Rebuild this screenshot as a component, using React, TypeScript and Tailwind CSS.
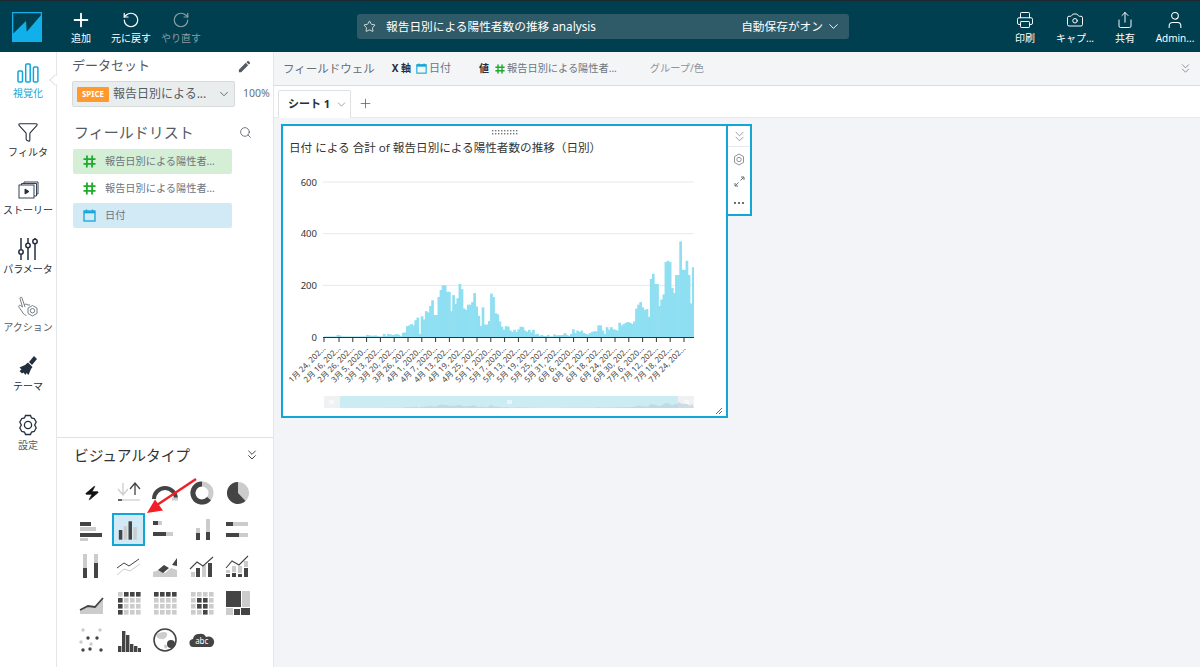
import {
  Camera,
  ChevronDown,
  ChevronsDown,
  Funnel,
  Plus,
  Printer,
  RotateCcw,
  RotateCw,
  Search,
  Share,
  Star,
  User,
  Zap,
} from 'lucide-react';
import { MdEdit } from 'react-icons/md';
import type { ReactNode } from 'react';

const FONT = "font-['Noto_Sans','Noto_Sans_CJK_JP',sans-serif]";

// daily counts read off the chart
const counts = [
  2, 2, 2, 2, 2, 2, 8, 6, 2, 2, 2, 2, 2, 2, 2, 2, 2, 2, 2, 2, 8, 6, 5, 5, 6, 3, 2, 2, 12, 3, 12, 10, 8, 9, 12, 9, 3, 16,
  18, 42, 45, 50, 45, 65, 75, 12, 80, 68, 100, 95, 120, 142, 85, 85, 155, 182, 200, 200, 175, 175, 100, 162, 128, 150,
  205, 185, 110, 105, 125, 125, 135, 170, 118, 82, 43, 115, 48, 48, 62, 168, 155, 92, 88, 60, 40, 28, 42, 40, 25, 20,
  28, 20, 30, 40, 38, 25, 20, 28, 18, 28, 10, 12, 5, 8, 4, 3, 8, 2, 2, 10, 6, 7, 7, 8, 15, 8, 4, 12, 30, 15, 25, 20, 25,
  15, 12, 10, 15, 20, 22, 22, 45, 45, 25, 12, 38, 28, 38, 30, 28, 25, 55, 45, 50, 55, 58, 55, 50, 60, 110, 125, 135,
  115, 105, 108, 78, 225, 245, 205, 205, 120, 145, 165, 290, 295, 290, 190, 170, 240, 240, 370, 260, 260, 295, 240, 130,
  270,
];

const dates = [
  '1月 24, 202...', '2月 16, 202...', '2月 26, 202...', '3月 5, 2020...', '3月 13, 202...', '3月 20, 202...',
  '3月 26, 202...', '4月 1, 2020...', '4月 7, 2020...', '4月 13, 202...', '4月 19, 202...', '4月 25, 202...',
  '5月 1, 2020...', '5月 7, 2020...', '5月 13, 202...', '5月 19, 202...', '5月 25, 202...', '5月 31, 202...',
  '6月 6, 2020...', '6月 12, 202...', '6月 18, 202...', '6月 24, 202...', '6月 30, 202...', '7月 6, 2020...',
  '7月 12, 202...', '7月 18, 202...', '7月 24, 202...',
];

function HashIcon({ size = 13, className = '' }: { size?: number; className?: string }) {
  return (
    <svg width={size} height={size} viewBox="0 0 13 13" fill="none" stroke="#1dab2c" strokeWidth="1.8" className={className}>
      <path d="M4 .5l-.2 12M9.200 .5L9 12.500M.5 4.200h12M.5 8.800h12" />
    </svg>
  );
}

function CalendarIcon({ size = 13, className = '' }: { size?: number; className?: string }) {
  return (
    <svg width={size} height={size} viewBox="0 0 13 13" fill="none" stroke="#12a5d6" strokeWidth="1.3" className={className}>
      <rect x="1" y="2" width="11" height="10" />
      <path d="M1 3.300h11" strokeWidth="2" />
      <path d="M3.500 .5v2M9.500 .5v2" />
    </svg>
  );
}

function TopButton({ icon, label, dim }: { icon: ReactNode; label: string; dim?: boolean }) {
  return (
    <div className={`flex w-[50px] flex-col items-center ${dim ? 'text-[#8a9da3]' : 'text-white'}`}>
      <div className="flex h-[22px] items-center">{icon}</div>
      <span className="text-[10px] leading-[14px] whitespace-nowrap">{label}</span>
    </div>
  );
}

function RailItem({ icon, label, active, muted }: { icon: ReactNode; label: string; active?: boolean; muted?: boolean }) {
  return (
    <div className={`flex h-[58.6px] flex-col items-center ${active ? 'text-[#12a5d6]' : muted ? 'text-[#545b64]' : 'text-[#232f3e]'}`}>
      <div className="flex h-[26px] items-center justify-center">{icon}</div>
      <span className="text-[10px] leading-[14px] whitespace-nowrap">{label}</span>
    </div>
  );
}

function FieldRow({ kind, label, bg }: { kind: 'hash' | 'date'; label: string; bg: string }) {
  return (
    <div className={`flex h-[25px] items-center rounded-[2px] pl-[10px] ${bg}`}>
      {kind === 'hash' ? <HashIcon /> : <CalendarIcon />}
      <span className="ml-[9px] text-[10.2px] text-[#6b7580]">{label}</span>
    </div>
  );
}

const D = '#444';
const L = '#ccc';

// rects drawn on a 30x30 box, [x, y, w, h, fill]
function Bars({ items }: { items: number[][] }) {
  return (
    <svg width="30" height="30" viewBox="0 0 30 30">
      {items.map(([x, y, w, h, c], i) => (
        <rect key={i} x={x} y={y} width={w} height={h} fill={c ? D : L} />
      ))}
    </svg>
  );
}

function Cells({ dark }: { dark: number[] }) {
  const cells = [];
  for (let r = 0; r < 4; r++) {
    for (let c = 0; c < 4; c++) {
      cells.push(
        <rect key={`${r}${c}`} x={4 + c * 6} y={4 + r * 6} width="4.6" height="4.6" fill={dark.includes(r * 4 + c) ? D : L} />,
      );
    }
  }
  return (
    <svg width="30" height="30" viewBox="0 0 30 30">
      {cells}
    </svg>
  );
}

function VisualTypes() {
  const icons: ReactNode[] = [
    <Zap key="a" size={16} fill="#111" strokeWidth={1} className="-skew-x-12 text-[#111]" />,
    <svg key="b" width="30" height="30" viewBox="0 0 30 30" fill="none">
      <path d="M9 5v12M4 11l5 6 5-6" stroke={L} strokeWidth="1.3" />
      <path d="M21 17V5M16 11l5-6 5 6" stroke={D} strokeWidth="1.3" />
      <path d="M4 22h22" stroke={L} strokeWidth="1.2" />
      <path d="M4 22h4" stroke={D} strokeWidth="1.6" />
    </svg>,
    <svg key="c" width="30" height="30" viewBox="0 0 30 30" fill="none">
      <path d="M4 21a11 11 0 0 1 22 0" stroke={D} strokeWidth="4" />
      <path d="M22 21h6" stroke={L} strokeWidth="3" />
    </svg>,
    <svg key="d" width="30" height="30" viewBox="0 0 30 30" fill="none">
      <circle cx="15" cy="15" r="9" stroke={L} strokeWidth="5" />
      <path d="M15 6a9 9 0 1 0 7 14.6" stroke={D} strokeWidth="5" />
    </svg>,
    <svg key="e" width="30" height="30" viewBox="0 0 30 30">
      <circle cx="15" cy="15" r="11" fill={L} />
      <path d="M15 15V4A11 11 0 1 0 22.500 23Z" fill={D} />
    </svg>,
    <Bars key="f" items={[[3, 7, 11, 4, 1], [3, 12, 16, 4, 0], [3, 18, 22, 4, 1], [3, 23, 8, 3, 0]]} />,
    <Bars key="g" items={[[5, 15, 3.6, 10, 1], [10, 11, 3.6, 14, 0], [15, 6, 3.6, 19, 1], [20, 12, 3.6, 13, 0]]} />,
    <Bars key="h" items={[[3, 6, 5, 4, 1], [8, 6, 4, 4, 0], [3, 17, 13, 4, 1], [16, 17, 7, 4, 0]]} />,
    <Bars key="i" items={[[9, 13, 4, 5, 0], [9, 18, 4, 7, 1], [19, 4, 4, 13, 0], [19, 17, 4, 8, 1]]} />,
    <Bars key="j" items={[[3, 7, 7, 4, 1], [10, 7, 15, 4, 0], [3, 18, 13, 4, 1], [16, 18, 9, 4, 0]]} />,
    <Bars key="k" items={[[6, 3, 4, 14, 0], [6, 17, 4, 10, 1], [17, 3, 4, 9, 0], [17, 12, 4, 15, 1]]} />,
    <svg key="l" width="30" height="30" viewBox="0 0 30 30" fill="none">
      <path d="M3 17l7-5 5 3 10-7" stroke={D} strokeWidth="1" />
      <path d="M3 24l7-6 6 2 10-7" stroke={L} strokeWidth="1" />
    </svg>,
    <svg key="m" width="30" height="30" viewBox="0 0 30 30">
      <path d="M3 26v-5l6-2 6 3 6-5 6 2v7Z" fill={L} />
      <path d="M8 19l6-5 5 3-6 5ZM22 14l5-7v8Z" fill={D} />
    </svg>,
    <svg key="n" width="30" height="30" viewBox="0 0 30 30" fill="none">
      <rect x="9" y="17" width="4" height="9" fill={D} />
      <rect x="4" y="21" width="4" height="5" fill={L} />
      <rect x="15" y="14" width="4" height="12" fill={L} />
      <rect x="21" y="12" width="4" height="14" fill={D} />
      <path d="M3 18l7-7 6 4 10-9" stroke={D} strokeWidth="1.1" />
    </svg>,
    <svg key="o" width="30" height="30" viewBox="0 0 30 30" fill="none">
      <rect x="3" y="23" width="4" height="3" fill={D} />
      <rect x="9" y="22" width="4" height="4" fill={D} />
      <rect x="15" y="23" width="4" height="3" fill={D} />
      <rect x="21" y="17" width="4" height="9" fill={D} />
      <rect x="3" y="19" width="4" height="3" fill={L} />
      <rect x="9" y="15" width="4" height="6" fill={L} />
      <rect x="15" y="15" width="4" height="7" fill={L} />
      <rect x="21" y="10" width="4" height="6" fill={L} />
      <path d="M3 17l6-7 7 4 9-9" stroke={D} strokeWidth="1.1" />
    </svg>,
    <svg key="p" width="30" height="30" viewBox="0 0 30 30" fill="none">
      <path d="M3 22l8-4 7 1 8-9v16H3Z" fill={L} />
      <path d="M3 22l8-4 7 1 8-9" stroke={D} strokeWidth="1.8" />
    </svg>,
    <Cells key="q" dark={[1, 2, 3, 4, 8, 12]} />,
    <Cells key="r" dark={[0, 1, 2, 3]} />,
    <Cells key="s" dark={[5, 6, 9, 10, 14]} />,
    <Bars key="t" items={[[3, 3, 15, 16, 1], [19, 3, 8, 16, 0], [3, 20, 7, 7, 0], [11, 21, 6, 6, 1], [18, 20, 9, 7, 1]]} />,
    <svg key="u" width="30" height="30" viewBox="0 0 30 30">
      {[[6, 5, 0], [23, 5, 0], [11, 13, 1], [20, 13, 1], [14, 19, 0], [6, 25, 1], [13, 24, 1], [24, 25, 1], [4, 17, 0]].map(
        ([x, y, c], i) => (
          <circle key={i} cx={x} cy={y} r="1.7" fill={c ? D : L} />
        ),
      )}
    </svg>,
    <Bars key="v" items={[[4, 21, 3.4, 6, 1], [8, 6, 3.4, 21, 1], [12, 10, 3.4, 17, 1], [16, 19, 3.4, 8, 1], [20, 21, 3.4, 6, 1], [24, 23, 3, 4, 1]]} />,
    <svg key="w" width="30" height="30" viewBox="0 0 30 30">
      <circle cx="15" cy="15" r="11" fill="#fff" stroke={D} strokeWidth="1.6" />
      <path d="M6 10c4-3 9-4 11-2 1 3-2 7-6 6-2 0-4-1-5-4ZM14 20c2-1 4 0 3 3-2 1-3 0-3-3Z" fill={L} />
      <circle cx="21" cy="19" r="4" fill={D} />
    </svg>,
    <div key="x" className="relative flex h-[30px] w-[30px] items-center justify-center">
      <svg width="26" height="18" viewBox="0 0 26 18" className="absolute">
        <path d="M5 16a4 4 0 0 1-1-8 6 6 0 0 1 6-5 6 6 0 0 1 7 3 5 5 0 0 1 5 10Z" fill={D} />
      </svg>
      <span className="relative top-[1px] text-[8px] text-white">abc</span>
    </div>,
  ];

  return (
    <div className="mt-[9px] grid grid-cols-[repeat(5,36.5px)] auto-rows-[36.6px] justify-start pl-[17px]">
      {icons.map((icon, i) => (
        <div key={i} className="flex items-center justify-center">
          {i === 6 ? (
            <div className="flex h-[33px] w-[33px] items-center justify-center border-2 border-[#12a5d6] bg-[#d2eaf6]">{icon}</div>
          ) : (
            icon
          )}
        </div>
      ))}
    </div>
  );
}

function Chart() {
  const base = 337;
  const unit = 155 / 600;
  const step = 370 / counts.length;
  const mini = counts.map((c, i) => `${324 + i * step},${408 - c * 0.016}`).join(' ');
  return (
    <svg viewBox="283 160 442 256" width="442" height="256" className="block">
      {[600, 400, 200].map((v) => (
        <line key={v} x1="323" x2="694" y1={base - v * unit} y2={base - v * unit} stroke="#e6e8eb" strokeWidth="1" />
      ))}
      {[600, 400, 200, 0].map((v) => (
        <text key={v} x="317" y={base - v * unit + 3.5} textAnchor="end" fontSize="9.5" fill="#333">
          {v}
        </text>
      ))}
      {counts.map((c, i) => (
        <rect key={i} x={324 + i * step} y={base - c * unit} width={i === counts.length - 1 ? step : step + 0.6} height={c * unit} fill="#8fdff2" />
      ))}
      <line x1="323" x2="694" y1={base + 0.5} y2={base + 0.5} stroke="#333" />
      {dates.map((d, i) => {
        const x = i === 0 ? 324 : 339 + (i - 1) * 13.8;
        return (
          <g key={d}>
            <line x1={x} x2={x} y1={base} y2={base + 5} stroke="#333" />
            <text x={x + 2} y={base + 12} transform={`rotate(-45 ${x + 2} ${base + 12})`} textAnchor="end" fontSize="8" fill="#444">
              {d}
            </text>
          </g>
        );
      })}
      <rect x="324" y="396" width="370" height="12" fill="#f0f1f3" />
      <rect x="340" y="396" width="338" height="12" fill="#ccecf4" />
      <polygon points={`324,408 ${mini} 694,408`} fill="#b4cfd6" opacity="0.6" />
      <path d="M507 401h5M507 403h5M329 401h5M329 403h5M684 401h5M684 403h5" stroke="#fff" />
      <path d="M716 414l6-6M719 414l3-3" stroke="#555" strokeWidth="0.9" />
    </svg>
  );
}

export default function App() {
  return (
    <div className={`flex h-[667px] w-[1200px] flex-col overflow-hidden bg-[#f3f4f7] ${FONT}`}>
      <header className="flex h-[52px] shrink-0 items-center border-t border-t-[#1b2a30] bg-[#003f4f] pl-[12px]">
        <svg width="30" height="30" viewBox="0 0 30 30" className="shrink-0">
          <rect width="30" height="30" fill="#12b0ea" />
          <path d="M1.300 1.300h27.400v2.200L14.700 19.700 14 9 1.300 21.500Z" fill="#003f4f" />
        </svg>
        <div className="ml-[14px] flex">
          <TopButton icon={<Plus size={22} strokeWidth={2} />} label="追加" />
          <TopButton icon={<RotateCcw size={18} strokeWidth={1.6} />} label="元に戻す" />
          <TopButton icon={<RotateCw size={18} strokeWidth={1.6} />} label="やり直す" dim />
        </div>
        <div className="ml-[151px] flex h-[25px] w-[492px] items-center rounded-[3px] bg-[#2f5b69] pl-[6px] pr-[8px] text-[11.7px] text-white">
          <Star size={13} strokeWidth={1.4} />
          <span className="ml-[10px]">報告日別による陽性者数の推移 analysis</span>
          <span className="ml-auto">自動保存がオン</span>
          <ChevronDown size={15} strokeWidth={1.5} className="ml-[3px]" />
        </div>
        <div className="ml-auto flex">
          <TopButton icon={<Printer size={18} strokeWidth={1.3} />} label="印刷" />
          <TopButton icon={<Camera size={18} strokeWidth={1.3} />} label="キャプ..." />
          <TopButton icon={<Share size={18} strokeWidth={1.3} />} label="共有" />
          <TopButton icon={<User size={20} strokeWidth={1.3} />} label="Admin..." />
        </div>
      </header>

      <div className="flex min-h-0 flex-1">
        <nav className="relative z-10 w-[57px] shrink-0 border-r border-[#e4e6e9] bg-white pt-[8px]">
          <RailItem
            active
            label="視覚化"
            icon={
              <svg width="22" height="22" viewBox="0 0 22 22" fill="none" stroke="currentColor" strokeWidth="1.5">
                <rect x="1" y="9" width="4.5" height="11" rx="1" />
                <rect x="8.700" y="2" width="4.5" height="18" rx="1" />
                <rect x="16.400" y="5" width="4.5" height="15" rx="1" />
              </svg>
            }
          />
          <RailItem label="フィルタ" icon={<Funnel size={22} strokeWidth={1.2} />} />
          <RailItem
            label="ストーリー"
            icon={
              <svg width="21" height="18" viewBox="0 0 21 18" fill="none" stroke="currentColor" strokeWidth="0.9">
                <rect x="1" y="4" width="15" height="13" />
                <path d="M3.500 4V2.500h15V15H16M6 2.500V1h14v12h-1.500" />
                <path d="M7 8l4 2.500L7 13Z" fill="currentColor" />
              </svg>
            }
          />
          <RailItem
            label="パラメータ"
            icon={
              <svg width="20" height="24" viewBox="0 0 20 24" fill="none" stroke="currentColor" strokeWidth="1.5">
                <path d="M3 1v11M3 18v5M10 1v5M10 11v12M17 1v1M17 7v16" />
                <circle cx="3" cy="15" r="2.200" />
                <circle cx="10" cy="8.500" r="2.200" />
                <circle cx="17" cy="4.500" r="2.200" />
              </svg>
            }
          />
          <RailItem
            muted
            label="アクション"
            icon={
              <svg width="22" height="24" viewBox="0 0 22 24" fill="none" stroke="#687078" strokeWidth="0.9">
                <path d="M8 12L5 3C4.600 1.600 2.800 2 3 3.600L5.500 12 3.500 10.500C2.500 9.800 1.200 11 2 12.200L6 18C7 19.500 8 20 9.500 20.500M7.500 9.500L9 9l2 1h2" />
                <path d="M15.500 10.500l4.500 2.600v5.300l-4.500 2.600-4.500-2.600v-5.300Z" />
                <circle cx="15.500" cy="15.700" r="2.200" />
              </svg>
            }
          />
          <RailItem
            label="テーマ"
            icon={
              <svg width="22" height="22" viewBox="0 0 22 22" fill="currentColor">
                <path d="M17 1l3 3-5 6-3-3Z" />
                <path d="M11 7.500l4.500 4.500-1.500 2-2.500 6-2-2-1 2-2-2.500-1.500 1-2.500-2.500 2-1.500-2-2 5.500-2.500Z" />
              </svg>
            }
          />
          <RailItem
            muted
            label="設定"
            icon={
              <svg width="20" height="22" viewBox="0 0 20 22" fill="none" stroke="#232f3e" strokeWidth="1.3">
                <path d="M7.500 1.500h5l1 2.500 2.700.5 2 3.500-1.500 3 1.500 3-2 3.500-2.700.5-1 2.500h-5l-1-2.500-2.700-.5-2-3.500 1.500-3-1.500-3 2-3.500 2.700-.5Z" />
                <circle cx="10" cy="11" r="3.600" />
              </svg>
            }
          />
          <div className="absolute top-[24px] right-[-3px] h-[8px] w-[8px] rotate-45 border-b border-l border-[#dfe2e5] bg-white" />
        </nav>

        <aside className="flex w-[217px] shrink-0 flex-col border-r border-[#e4e6e9] bg-white">
          <div className="h-[385px] shrink-0 pl-[15px] pr-[3px] pt-[4px]">
            <div className="flex h-[20px] items-center justify-between pr-[18px] text-[13px] text-[#545b64]">
              <span>データセット</span>
              <MdEdit size={15} className="text-[#545b64]" />
            </div>
            <div className="mt-[5px] flex items-center">
              <div className="flex h-[26px] w-[163px] items-center rounded-[2px] border border-[#d5dbdb] bg-[#eaeded] pl-[4px] pr-[3px]">
                <span className="flex h-[15px] w-[32px] items-center justify-center rounded-[1px] bg-[#ff9a2e] text-[8px] font-bold text-white">SPICE</span>
                <span className="ml-[4px] whitespace-nowrap text-[12px] text-[#545b64]">報告日別による...</span>
                <ChevronDown size={14} strokeWidth={1.5} className="ml-auto text-[#545b64]" />
              </div>
              <span className="ml-[8px] text-[10.5px] text-[#687078]">100%</span>
            </div>
            <div className="mt-[13px] flex h-[24px] items-center justify-between pl-[2px] pr-[18px]">
              <span className="text-[15px] text-[#545b64]">フィールドリスト</span>
              <Search size={13} strokeWidth={1.5} className="text-[#545b64]" />
            </div>
            <div className="ml-[1px] mt-[5px] flex w-[159px] flex-col gap-[2px]">
              <FieldRow kind="hash" label="報告日別による陽性者..." bg="bg-[#d5eed6]" />
              <FieldRow kind="hash" label="報告日別による陽性者..." bg="bg-white" />
              <FieldRow kind="date" label="日付" bg="bg-[#d2eaf6]" />
            </div>
          </div>
          <div className="flex-1 border-t border-[#dfe2e5] pt-[6px]">
            <div className="flex h-[22px] items-center justify-between pl-[17px] pr-[13px]">
              <span className="text-[14.7px] text-[#333]">ビジュアルタイプ</span>
              <ChevronsDown size={16} strokeWidth={1.5} className="text-[#444]" />
            </div>
            <VisualTypes />
          </div>
        </aside>

        <main className="flex min-w-0 flex-1 flex-col">
          <div className="flex h-[34px] shrink-0 items-center border-b border-[#d9dce0] bg-[#f4f5f7] pl-[9px] pr-[7px] text-[11px] text-[#6b7580]">
            <span className="text-[11.5px] text-[#687078]">フィールドウェル</span>
            <span className="ml-[17px] text-[10px] font-bold text-[#232f3e]">X 軸</span>
            <CalendarIcon size={11} className="ml-[5px]" />
            <span className="ml-[2px]">日付</span>
            <span className="ml-[28px] text-[10px] font-bold text-[#232f3e]">値</span>
            <HashIcon size={10} className="ml-[6px]" />
            <span className="ml-[2px] text-[10.2px]">報告日別による陽性者...</span>
            <span className="ml-[33px] text-[10.2px] text-[#8d949c]">グループ/色</span>
            <ChevronsDown size={15} strokeWidth={1.2} className="ml-auto text-[#687078]" />
          </div>
          <div className="flex h-[32px] shrink-0 items-end border-b border-[#e8eaed] bg-white pl-[4px]">
            <div className="relative top-px flex h-[28px] w-[73px] items-center rounded-t-[2px] border border-b-0 border-[#dfe2e5] bg-white pl-[9px]">
              <span className="text-[11px] font-bold text-[#232f3e]">シート 1</span>
              <ChevronDown size={13} strokeWidth={1.2} className="ml-[5px] text-[#687078]" />
            </div>
            <Plus size={15} strokeWidth={1.2} className="mb-[6px] ml-[7px] text-[#545b64]" />
          </div>
          <div className="flex items-start pl-[7px] pt-[6px]">
            <section className="relative h-[294px] w-[447px] border-2 border-[#12a5d6] bg-white">
              <div className="flex h-[12px] justify-center pt-[4px]">
                <svg width="26" height="5" viewBox="0 0 26 5" fill="#777">
                  {[0, 1, 2, 3, 4, 5, 6, 7, 8].map((i) => (
                    <g key={i}>
                      <rect x={i * 3} y="0" width="1.4" height="1.4" />
                      <rect x={i * 3} y="3" width="1.4" height="1.4" />
                    </g>
                  ))}
                </svg>
              </div>
              <h2 className="ml-[6px] h-[22px] text-[11.6px] leading-[20px] text-[#333]">
                日付 による 合計 of 報告日別による陽性者数の推移（日別）
              </h2>
              <Chart />
            </section>
            <div className="flex h-[92px] w-[24px] flex-col items-center border-2 border-l-0 border-[#12a5d6] bg-white text-[#8d949c]">
              <div className="flex h-[21px] w-full items-center justify-center border-b border-[#e8eaed]">
                <ChevronsDown size={17} strokeWidth={1.3} />
              </div>
              <svg width="12" height="13" viewBox="0 0 12 13" fill="none" stroke="currentColor" className="mt-[6px]">
                <path d="M6 1l4.500 2.600v5.800L6 12 1.500 9.400V3.600Z" />
                <circle cx="6" cy="6.500" r="2.200" />
              </svg>
              <svg width="11" height="11" viewBox="0 0 11 11" fill="none" stroke="#687078" className="mt-[10px]">
                <path d="M6.500 4.500L10 1M7 1h3v3M4.500 6.500L1 10M1 7v3h3" />
              </svg>
              <div className="mt-[15px] flex gap-[2px]">
                <span className="h-[2px] w-[2px] bg-[#687078]" />
                <span className="h-[2px] w-[2px] bg-[#687078]" />
                <span className="h-[2px] w-[2px] bg-[#687078]" />
              </div>
            </div>
          </div>
        </main>
      </div>

      <svg width="60" height="46" viewBox="0 0 60 46" className="absolute left-[143px] top-[476px]">
        <path d="M53 3L14 29" stroke="#f21f26" strokeWidth="2.400" />
        <path d="M4 37l16-2.500-8-11Z" fill="#f21f26" />
      </svg>
    </div>
  );
}
